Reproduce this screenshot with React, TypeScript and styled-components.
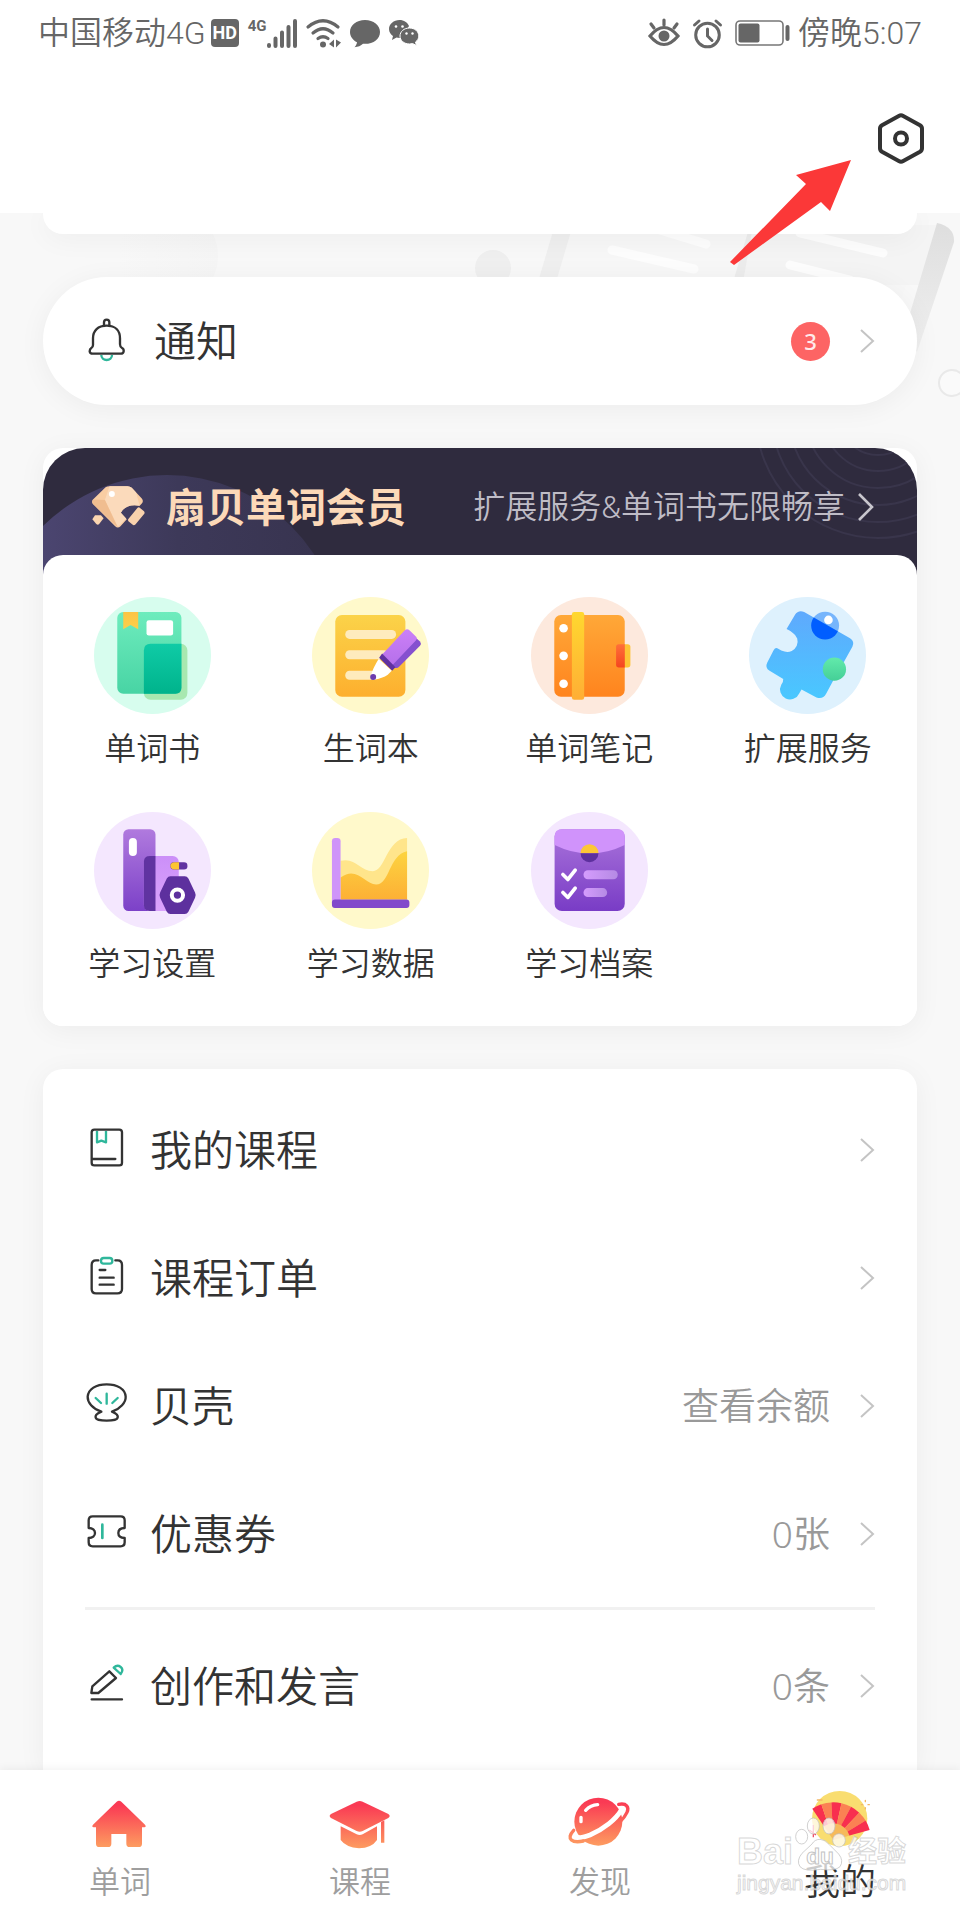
import React from "react";
import styled, { createGlobalStyle } from "styled-components";

const GlobalStyle = createGlobalStyle`
  *, *::before, *::after { box-sizing: border-box; }
  body {
    margin: 0;
    background: #f8f8f8;
    color: #333;
    font-family: Roboto, "Noto Sans CJK SC", sans-serif;
    font-weight: 350;
  }
  a { color: inherit; text-decoration: none; }
  svg { display: block; flex: none; overflow: visible; }
`;

const Page = styled.div`
  position: relative;
  min-height: 100vh;
  display: flex;
  flex-direction: column;
`;

const Header = styled.header`
  background: #fff;
  position: relative;
  z-index: 2;
`;

const StatusBar = styled.div`
  height: 66px;
  padding: 0 38px;
  display: flex;
  justify-content: space-between;
  align-items: center;
  color: #666;
  font-size: 32px;
  line-height: 40px;
`;

const StatusGroup = styled.div<{ $gap: number }>`
  display: flex;
  align-items: center;
  gap: ${(p) => p.$gap}px;
`;

const HdBadge = styled.span`
  width: 28px;
  height: 28px;
  border-radius: 4px;
  background: #666;
  color: #fff;
  font-size: 18px;
  line-height: 28px;
  font-weight: 700;
  text-align: center;
`;

const Signal = styled.span`
  display: flex;
  align-items: flex-start;
  font-size: 15px;
  line-height: 15px;
  font-weight: 700;
`;

const AppBar = styled.div`
  height: 147px;
  padding: 0 36px 2px;
  display: flex;
  justify-content: flex-end;
  align-items: center;
`;

const IconButton = styled.button`
  padding: 0;
  border: 0;
  background: none;
  cursor: pointer;
`;

const Pointer = styled.svg`
  position: absolute;
  top: 160px;
  right: 109px;
  z-index: 3;
`;

const Main = styled.main`
  position: relative;
  flex: 1;
  display: flex;
  flex-direction: column;
  gap: 43px;
  padding: 0 43px;
  overflow: hidden;
`;

const Backdrop = styled.svg`
  position: absolute;
  top: 0;
  right: 0;
`;

const Card = styled.section`
  position: relative;
  background: #fff;
  border-radius: 20px;
  box-shadow: 0 4px 28px rgba(0, 0, 0, 0.05);
`;

const ProfileCard = styled(Card)`
  height: 21px;
  border-radius: 0 0 20px 20px;
`;

const NoticeCard = styled(Card)`
  border-radius: 64px;
`;

const ListCard = styled(Card)`
  flex: 1;
  padding-top: 17px;
  border-radius: 20px 20px 0 0;
`;

const Row = styled.a<{ $gap?: number }>`
  height: 128px;
  padding: 0 43px;
  display: flex;
  align-items: center;
  gap: ${(p) => p.$gap ?? 22}px;
  font-size: 42px;
  line-height: 56px;
`;

const RowLabel = styled.span`
  padding-top: 4px;
`;

const RowEnd = styled.span`
  margin-left: auto;
  display: flex;
  align-items: center;
  gap: 30px;
  color: #999;
  font-family: "Noto Sans", "Noto Sans CJK SC", sans-serif;
  font-size: 37px;
  line-height: 48px;
`;

const CountBadge = styled.span`
  width: 39px;
  height: 39px;
  border-radius: 50%;
  background: #fd6464;
  color: #ffeaea;
  font-size: 22px;
  line-height: 39px;
  font-weight: 500;
  text-align: center;
`;

const Divider = styled.hr`
  height: 3px;
  margin: 9px 42px 12px;
  border: 0;
  background: #f1f1f1;
`;

const Banner = styled.a`
  position: relative;
  height: 127px;
  padding: 0 43px 9px 49px;
  display: flex;
  align-items: center;
  gap: 21px;
  overflow: hidden;
  border-radius: 42px 42px 0 0;
  background: #2f2b3e;
`;

const BannerArt = styled.svg<{ $side: "left" | "right" }>`
  position: absolute;
  top: 0;
  ${(p) => p.$side}: 0;
`;

const BannerLead = styled.span`
  position: relative;
  display: flex;
  align-items: center;
  gap: 21px;
`;

const BannerTitle = styled.strong`
  padding-top: 4px;
  color: #fcd9b8;
  font-size: 40px;
  line-height: 52px;
  font-weight: 700;
`;

const BannerNote = styled.span`
  position: relative;
  margin-left: auto;
  display: flex;
  align-items: center;
  gap: 12px;
  color: #bfbcc6;
  font-size: 32px;
  line-height: 40px;
`;

const Tiles = styled.div`
  position: relative;
  margin-top: -20px;
  padding: 42px 0 40px;
  display: grid;
  grid-template-columns: repeat(4, 1fr);
  row-gap: 41px;
  border-radius: 20px;
  background: #fff;
`;

const Tile = styled.a`
  display: flex;
  flex-direction: column;
  align-items: center;
  gap: 13px;
  font-size: 32px;
  line-height: 44px;
`;

const TabBar = styled.nav`
  position: relative;
  z-index: 2;
  height: 150px;
  display: grid;
  grid-template-columns: repeat(4, 1fr);
  background: #fff;
  box-shadow: 0 -2px 8px rgba(0, 0, 0, 0.05);
`;

const Tab = styled.a<{ $active?: boolean }>`
  padding-top: 21px;
  display: flex;
  flex-direction: column;
  align-items: center;
  gap: 10px;
  color: ${(p) => (p.$active ? "#333" : "#9e9e9e")};
  font-size: ${(p) => (p.$active ? 36 : 31)}px;
  line-height: 44px;
`;

const Watermark = styled.div`
  position: absolute;
  right: 52px;
  top: 47px;
  width: 171px;
  color: rgba(255, 255, 255, 0.75);
  font-family: "Liberation Sans", "Noto Sans CJK SC", sans-serif;
  font-weight: 400;
  -webkit-text-stroke: 1px rgba(190, 190, 190, 0.6);
  pointer-events: none;
`;

const WatermarkName = styled.div`
  display: flex;
  align-items: flex-end;
  gap: 2px;
  font-size: 36px;
  line-height: 38px;
  font-weight: 700;
`;

const WatermarkSuffix = styled.span`
  font-size: 29px;
  line-height: 38px;
`;

const WatermarkSite = styled.div`
  font-size: 21px;
  line-height: 24px;
`;

const Chevron = ({ large }: { large?: boolean }) =>
  large ? (
    <svg width="17" height="28" viewBox="0 0 17 28" fill="none" stroke="#c8c6cd" strokeWidth="2.6">
      <path d="M2 1 15 14 2 27" />
    </svg>
  ) : (
    <svg width="14" height="24" viewBox="0 0 14 24" fill="none" stroke="#c4c4c4" strokeWidth="2">
      <path d="M1 1 13 12 1 23" />
    </svg>
  );

/* ---------- status bar ---------- */

const SignalBars = () => (
  <svg width="30" height="29" viewBox="0 0 30 29" stroke="#666" strokeWidth="4" strokeLinecap="round">
    <path d="M2 26v1M8.500 19.500v7.500M15 13.500v13.500M21.500 8v19M28 2v25" />
  </svg>
);

const WifiIcon = () => (
  <svg width="35" height="29" viewBox="0 0 35 29" fill="none" stroke="#666" strokeWidth="3.200" strokeLinecap="round">
    <path d="M2 8Q17 -4.500 32 8M7 14Q17 5.500 27 14M12 19.500Q17 16 22 19.500" />
    <circle cx="17" cy="25.500" r="3" fill="#666" stroke="none" />
    <path d="M28 20.500v8l-5-3.500zM30 20.500v8l5-5z" fill="#666" stroke="none" />
  </svg>
);

const BubbleIcon = () => (
  <svg width="30" height="29" viewBox="0 0 30 29" fill="#666">
    <path d="M15 1C6.500 1 0 6.200 0 13c0 4.500 3 8.200 7 10.300-.3 2-1.200 3.700-2.500 5 3.500-.3 6.500-1.500 8.500-3.500C23 25.500 30 20.500 30 13 30 6.200 23.500 1 15 1z" />
  </svg>
);

const WechatIcon = () => (
  <svg width="30" height="26" viewBox="0 0 30 26" fill="#666">
    <path d="M10.500 0C4.700 0 0 4 0 9c0 3 1.700 5.500 4 7l-1 4 4.500-2.400c2 .5 4 .5 6 0L20 6C18.500 2.500 15 0 10.500 0z" />
    <path d="M20.500 8C15 8 11 11.600 11 16s4 8 9.500 8c1 0 2-.2 3-.5l4 2-1-3.500c2-1.500 3.300-3.500 3.300-6 0-4.400-4-8-9.300-8z" stroke="#fff" />
    <g fill="#fff">
      <circle cx="7" cy="6.500" r="1.300" />
      <circle cx="13.500" cy="6.500" r="1.300" />
      <circle cx="17.500" cy="13.500" r="1.200" />
      <circle cx="23.500" cy="13.500" r="1.200" />
    </g>
  </svg>
);

const EyeIcon = () => (
  <svg width="32" height="28" viewBox="0 0 32 28" fill="none" stroke="#666" strokeWidth="3.200" strokeLinecap="round">
    <path d="M2 17Q16 0 30 17Q16 34 2 17z" />
    <path d="M16 1v5M3 5l3 4M29 5l-3 4" />
    <circle cx="16" cy="17" r="5.500" fill="#666" stroke="none" />
  </svg>
);

const AlarmIcon = () => (
  <svg width="29" height="29" viewBox="0 0 29 29" fill="none" stroke="#666" strokeWidth="3" strokeLinecap="round">
    <circle cx="14.500" cy="16" r="11.800" />
    <path d="M14.500 10v7l4.500 4.500M1.500 6 6 2M27.500 6 23 2" />
  </svg>
);

const BatteryIcon = () => (
  <svg width="55" height="26" viewBox="0 0 55 26" fill="#666">
    <rect x="1" y="1" width="47" height="24" rx="4" fill="none" stroke="#777" strokeWidth="1.600" />
    <rect x="3.500" y="3.500" width="21" height="19" rx="2" />
    <rect x="50.500" y="5" width="4" height="16" rx="2" />
  </svg>
);

const HexIcon = () => (
  <svg width="46" height="51" viewBox="0 0 46 51" fill="none" stroke="#333" strokeWidth="4" strokeLinejoin="round">
    <path d="M20.800 2.900Q23 1.700 25.200 2.900L42 12.300Q44 13.500 44 15.800V35.200Q44 37.500 42 38.700L25.200 48.100Q23 49.300 20.800 48.100L4 38.700Q2 37.500 2 35.200V15.800Q2 13.500 4 12.300Z" />
    <circle cx="23" cy="25.500" r="6" />
  </svg>
);

/* ---------- line icons of the rows ---------- */

const LineIcon = ({ children }: { children: React.ReactNode }) => (
  <svg
    width="42"
    height="42"
    viewBox="0 3 126 126"
    fill="none"
    stroke="#333"
    strokeWidth="7"
    strokeLinecap="round"
    strokeLinejoin="round"
    aria-hidden="true"
  >
    {children}
  </svg>
);

const GREEN = "#2fb79b";

const BellIcon = () => (
  <LineIcon>
    <path d="M21 78V58C21 35 36 20 62 20S102 35 102 58V76Q102 84 108 87Q114 90 113 97Q112 104 104 104H20Q12 104 11 97Q11 90 16 87Q21 84 21 78Z" />
    <path d="M54 21V10Q54 2 62 2T70 10V21" />
    <path d="M46 108A16 15 0 0 0 78 108" stroke={GREEN} strokeLinecap="butt" />
  </LineIcon>
);

const BookIcon = () => (
  <LineIcon>
    <rect x="17" y="5" width="91" height="107" rx="8" />
    <path d="M19 93H88" />
    <path d="M33 9V43L46 38 60 43V9" stroke={GREEN} strokeLinecap="butt" />
  </LineIcon>
);

const OrderIcon = () => (
  <LineIcon>
    <path d="M37 13H30Q17 13 17 27V99Q17 112 30 112H94Q108 112 108 99V27Q108 13 95 13H88" />
    <path d="M41 42H58M41 65H83M41 86H83" />
    <rect x="45" y="6" width="34" height="17" rx="8" stroke={GREEN} />
  </LineIcon>
);

const ShellIcon = () => (
  <LineIcon>
    <path d="M46 83C20 75 4 55 5 38C7 15 30 1 62 1S118 15 119 38C120 55 103 75 78 83C90 88 97 95 95 101C93 108 79 110 62 110S31 108 29 101C27 95 34 88 46 83" />
    <path d="M62 29V59M29 42 45 57M95 42 79 57" stroke={GREEN} />
  </LineIcon>
);

const CouponIcon = () => (
  <LineIcon>
    <path d="M8 48V25Q8 13 20 13H104Q116 13 116 25V48C104 48 97 54 97 63S104 78 116 78V91Q116 103 104 103H20Q8 103 8 91V78C20 78 27 71 27 63S20 48 8 48Z" />
    <path d="M49 38V78" stroke={GREEN} strokeWidth="8" />
  </LineIcon>
);

const PencilIcon = () => (
  <LineIcon>
    <path d="M70 22 90 42 37 87H16L19 67ZM17 106H108" />
    <path d="M83 11Q94 1 104 9T104 30Z" stroke={GREEN} />
  </LineIcon>
);

/* ---------- round tile icons ---------- */

const Fade = ({ id, from, to }: { id: string; from: string; to: string }) => (
  <linearGradient id={id} x1="0" y1="0" x2="0" y2="1">
    <stop offset="0" stopColor={from} />
    <stop offset="1" stopColor={to} />
  </linearGradient>
);

const Disc = ({ color, children }: { color: string; children: React.ReactNode }) => (
  <svg width="117" height="117" viewBox="0 0 352 352" aria-hidden="true">
    <circle cx="176" cy="176" r="176" fill={color} />
    {children}
  </svg>
);

const WordBookArt = () => (
  <Disc color="#d7fdee">
    <Fade id="wb1" from="#6eecbd" to="#48d4a4" />
    <Fade id="wb2" from="#0fcba6" to="#00b38c" />
    <Fade id="wb3" from="#fcc444" to="#fbd04a" />
    <rect x="150" y="141" width="131" height="168" rx="20" fill="#a8e8b0" />
    <rect x="70" y="45" width="193" height="246" rx="18" fill="url(#wb1)" />
    <path d="M170 141H263V273Q263 291 245 291H150V161Q150 141 170 141Z" fill="url(#wb2)" />
    <path d="M88 45H133V97L110 84 88 97Z" fill="url(#wb3)" />
    <rect x="158" y="70" width="80" height="46" rx="7" fill="#fff" />
  </Disc>
);

const NewWordsArt = () => (
  <Disc color="#fff9cb">
    <Fade id="nw1" from="#fbd349" to="#fdaf2e" />
    <Fade id="nw2" from="#cb80f7" to="#b56fea" />
    <rect x="70" y="54" width="211" height="246" rx="20" fill="url(#nw1)" />
    <g fill="#feebbd">
      <rect x="100" y="99" width="153" height="27" rx="13" />
      <rect x="100" y="160" width="130" height="27" rx="13" />
      <rect x="100" y="222" width="95" height="27" rx="13" />
    </g>
    <path d="M314 124 325 134Q330 140 325 147L262 210Q255 217 247 211L236 202Z" fill="#8550cf" />
    <path d="M212 172 277 102Q285 93 294 101L314 120Q318 125 313 130L241 206Z" fill="url(#nw2)" />
    <path d="M211 170 202 183 241 222 251 211Z" fill="#5f31a0" />
    <path d="M201 186 240 222 228 234Q212 245 186 249L177 238Q183 214 201 186Z" fill="#fff" />
    <circle cx="184" cy="241" r="9" fill="#6c3cae" />
  </Disc>
);

const NotesArt = () => (
  <Disc color="#fde9dd">
    <Fade id="nt1" from="#ffa838" to="#ff841e" />
    <Fade id="nt2" from="#ffd82f" to="#ffae35" />
    <Fade id="nt3" from="#ff7039" to="#f4451f" />
    <rect x="256" y="142" width="43" height="70" rx="8" fill="#fdc435" />
    <rect x="70" y="54" width="212" height="246" rx="20" fill="url(#nt1)" />
    <path d="M264 142H282V212H264Q256 212 256 204V150Q256 142 264 142Z" fill="url(#nt3)" />
    <rect x="123" y="45" width="37" height="264" rx="7" fill="url(#nt2)" />
    <g fill="#fff">
      <circle cx="98" cy="94" r="13" />
      <circle cx="98" cy="177" r="13" />
      <circle cx="98" cy="261" r="13" />
    </g>
  </Disc>
);

const PUZZLE =
  "M113 96 138 54Q148 38 166 45L304 124Q319 134 311 150L288 191 251 256 232 291Q222 309 203 302L158 278 151 290A30 30 0 1 1 97 264Q104 255 103 247L62 222Q47 213 55 197L74 160Q80 150 88 156Q97 163 107 164A31 31 0 0 0 132 108Q124 101 113 96Z";

const ExtensionArt = () => (
  <Disc color="#def1fd">
    <Fade id="ex1" from="#5fa9fd" to="#49c8ff" />
    <Fade id="ex2" from="#62eaab" to="#45cf97" />
    <clipPath id="ex3">
      <path d={PUZZLE} />
    </clipPath>
    <circle cx="229" cy="86" r="42" fill="#76b5fc" />
    <path d={PUZZLE} fill="url(#ex1)" />
    <circle cx="229" cy="86" r="42" fill="#005eff" clipPath="url(#ex3)" />
    <circle cx="239" cy="69" r="13" fill="#fff" />
    <circle cx="257" cy="217" r="35" fill="url(#ex2)" />
  </Disc>
);

const SettingsArt = () => (
  <Disc color="#f4e7fe">
    <Fade id="st1" from="#b07ade" to="#7c41c8" />
    <Fade id="st2" from="#cb8ff8" to="#dba4fc" />
    <rect x="88" y="52" width="97" height="246" rx="16" fill="url(#st1)" />
    <rect x="105" y="78" width="24" height="54" rx="12" fill="#fff" />
    <rect x="150" y="132" width="105" height="166" rx="18" fill="url(#st2)" />
    <path d="M168 132H185V298H168Q150 298 150 280V150Q150 132 168 132Z" fill="#6033a1" />
    <rect x="230" y="151" width="51" height="22" rx="10" fill="#6033a1" />
    <path d="M240 151H256V173H240Q230 171 230 162T240 151Z" fill="#fdc534" />
    <path d="M230 193H273Q280 193 284 200L304 242Q308 250 304 258L284 300Q280 307 273 307H230Q223 307 219 300L199 258Q195 250 199 242L219 200Q223 193 230 193Z" fill="#5d309e" />
    <circle cx="251" cy="250" r="17" fill="none" stroke="#fff" strokeWidth="12" />
  </Disc>
);

const DataArt = () => (
  <Disc color="#fff9cb">
    <Fade id="dt1" from="#fcd440" to="#fdb035" />
    <path d="M86 147C130 135 145 178 183 178C220 178 225 80 286 78V263H86Z" fill="#ffe58b" />
    <path d="M86 197C135 160 160 218 193 218C235 218 230 130 286 118V263H86Z" fill="url(#dt1)" />
    <rect x="60" y="78" width="26" height="205" rx="10" fill="#cf94f9" />
    <rect x="60" y="263" width="233" height="26" rx="9" fill="#8249cb" />
  </Disc>
);

const ArchiveArt = () => (
  <Disc color="#f4e7fe">
    <Fade id="ar1" from="#a973da" to="#793cc6" />
    <linearGradient id="ar2">
      <stop offset="0" stopColor="#d59cfd" />
      <stop offset="1" stopColor="#b58ae4" />
    </linearGradient>
    <rect x="71" y="52" width="211" height="246" rx="22" fill="url(#ar1)" />
    <path d="M93 52H260Q282 52 282 74V99Q176 151 71 99V74Q71 52 93 52Z" fill="#d093fb" />
    <path d="M149 124A27 27 0 0 1 203 124Z" fill="#fdc636" />
    <path d="M149 124A27 27 0 0 0 203 124Z" fill="#5d309e" />
    <path d="M96 188 111 203 133 175M96 242 111 257 133 229" fill="none" stroke="#fff" strokeWidth="11" strokeLinecap="round" strokeLinejoin="round" />
    <rect x="158" y="175" width="103" height="27" rx="13" fill="url(#ar2)" />
    <rect x="158" y="229" width="71" height="27" rx="13" fill="url(#ar2)" />
  </Disc>
);

const GemIcon = () => (
  <svg width="53" height="42" viewBox="187 168 160 126" aria-hidden="true">
    <path d="M228 171Q233 168 240 168H294Q302 168 307 173L338 206Q343 213 338 220L331 227Q290 220 274 248L292 268 273 289Q265 297 257 289L190 222Q185 215 190 208Z" fill="#f9cda3" />
    <path d="M240 168H294Q302 168 307 173L320 187 331 227Q290 220 274 248L290 266 265 291 226 210Z" fill="#fbdabb" />
    <path d="M190 208 226 210 265 293 190 222Q185 215 190 208Z" fill="#f0bd90" />
    <path d="M324 234Q328 230 332 234L344 244Q348 249 343 254L318 284Q313 288 309 284L297 274Q294 270 298 266Z" fill="#f9d2ad" />
    <path d="M196 256H214L222 265 208 283Q204 286 200 282L188 268Z" fill="#fbd5b0" />
    <circle cx="247" cy="192" r="9" fill="#fff" />
  </svg>
);

/* ---------- tab icons ---------- */

const TabArt = ({ x, children }: { x: number; children: React.ReactNode }) => (
  <svg width="66" height="60" viewBox={`${x} 123 198 180`} aria-hidden="true">
    {children}
  </svg>
);

const Sunset = ({ id, y1, y2 }: { id: string; y1: number; y2: number }) => (
  <linearGradient id={id} gradientUnits="userSpaceOnUse" x1="0" y1={y1} x2="0" y2={y2}>
    <stop offset="0.1" stopColor="#fa3a54" />
    <stop offset="1" stopColor="#fd9c60" />
  </linearGradient>
);

const HomeArt = () => (
  <TabArt x={261}>
    <Sunset id="tb1" y1={152} y2={291} />
    <path d="M350 155Q357 150 364 155L435 224Q440 230 433 232H426V281Q426 291 416 291H389Q379 291 379 281V252H334V281Q334 291 324 291H298Q288 291 288 281V232H281Q274 230 279 224Z" fill="url(#tb1)" />
  </TabArt>
);

const CapArt = () => (
  <TabArt x={981}>
    <Sunset id="tb2" y1={152} y2={295} />
    <g fill="url(#tb2)">
      <path d="M1070 155Q1079 151 1088 155L1165 192Q1173 198 1165 204L1088 243Q1079 247 1070 243L993 204Q985 198 993 192Z" />
      <path d="M1022 229 1070 253Q1079 257 1088 253L1131 229V270Q1115 294 1077 295Q1038 292 1022 270Z" />
      <path d="M1143 216 1153 211V278H1143Z" />
    </g>
  </TabArt>
);

const PlanetArt = () => (
  <TabArt x={261}>
    <Sunset id="tb3" y1={142} y2={287} />
    <circle cx="355" cy="215" r="72" fill="url(#tb3)" />
    <path d="M287 256C293 268 312 262 330 255C370 238 408 208 424 180" fill="none" stroke="#fff" strokeWidth="14" />
    <path d="M416 163C440 158 448 172 441 187C436 198 428 208 418 218M310 273C278 280 256 268 281 241" fill="none" stroke="url(#tb3)" strokeWidth="10" strokeLinecap="round" />
    <path d="M317 181Q332 165 353 164M303 202V215" fill="none" stroke="#fff" strokeWidth="10" strokeLinecap="round" />
  </TabArt>
);

const FAN_STEPS = [0, 1, 2, 3, 4, 5, 6];

const fanPoint = (degrees: number, radius: number) => {
  const a = (degrees * Math.PI) / 180;
  return `${(1060 + radius * Math.cos(a)).toFixed(1)} ${(270 - radius * Math.sin(a)).toFixed(1)}`;
};

const FanArt = () => (
  <TabArt x={981}>
    <circle cx="1079" cy="206" r="83" fill="#f9dd70" />
    <path d={`M${fanPoint(124, 60)}A60 60 0 0 1 ${fanPoint(15, 60)}L1060 270Z`} fill="#f6b95a" />
    {FAN_STEPS.map((i) => {
      const start = 124 - i * 15.5;
      const end = start - 15.5;
      return (
        <path
          key={i}
          d={`M${fanPoint(start, 50)}L${fanPoint(start, 113)}A113 113 0 0 1 ${fanPoint(end, 113)}L${fanPoint(end, 50)}Z`}
          fill={i % 2 ? "#fb8153" : "#f82f4f"}
        />
      );
    })}
    <g stroke="#f3b765" strokeWidth="4" strokeLinecap="round">
      <path d="M1156 151V155M1156 173V177M1144 164H1148M1164 164H1168M1012 150H1026" />
    </g>
    <g stroke="#f0506a" strokeWidth="4" fill="none">
      <path d="M988 240 1008 255M1000 225V262" />
    </g>
  </TabArt>
);

const PawIcon = () => (
  <svg width="51" height="54" viewBox="945 203 153 162">
    <g fill="rgba(255,255,255,0.75)" stroke="rgba(190,190,190,0.7)" strokeWidth="3">
      <ellipse cx="1000" cy="230" rx="18" ry="24" />
      <ellipse cx="1047" cy="230" rx="18" ry="24" />
      <ellipse cx="965" cy="262" rx="18" ry="22" />
      <ellipse cx="1077" cy="273" rx="19" ry="20" />
      <path d="M1020 270Q1036 270 1048 286L1076 314Q1092 334 1080 352Q1066 366 1022 360Q974 368 960 352Q948 334 966 312L996 284Q1004 270 1020 270Z" />
    </g>
    <text x="1020" y="344" textAnchor="middle" fontSize="68" fontWeight="700" fill="#fff" stroke="#c4c4c4" strokeWidth="3">
      du
    </text>
  </svg>
);

/* ---------- page ---------- */

const tiles = [
  { label: "单词书", art: <WordBookArt /> },
  { label: "生词本", art: <NewWordsArt /> },
  { label: "单词笔记", art: <NotesArt /> },
  { label: "扩展服务", art: <ExtensionArt /> },
  { label: "学习设置", art: <SettingsArt /> },
  { label: "学习数据", art: <DataArt /> },
  { label: "学习档案", art: <ArchiveArt /> },
];

const rows = [
  { label: "我的课程", icon: <BookIcon /> },
  { label: "课程订单", icon: <OrderIcon /> },
  { label: "贝壳", icon: <ShellIcon />, value: "查看余额" },
  { label: "优惠券", icon: <CouponIcon />, value: "0张" },
];

const tabs = [
  { label: "单词", art: <HomeArt /> },
  { label: "课程", art: <CapArt /> },
  { label: "发现", art: <PlanetArt /> },
  { label: "我的", art: <FanArt />, active: true },
];

const RINGS = [39, 55, 72, 89, 106, 122];

const MenuRow = ({ label, icon, value }: { label: string; icon: React.ReactNode; value?: string }) => (
  <Row href="#">
    {icon}
    <RowLabel>{label}</RowLabel>
    <RowEnd>
      {value && <span>{value}</span>}
      <Chevron />
    </RowEnd>
  </Row>
);

export default function App() {
  return (
    <Page>
      <GlobalStyle />
      <Header>
        <StatusBar>
          <StatusGroup $gap={9}>
            <StatusGroup $gap={5}>
              <span>中国移动4G</span>
              <HdBadge>HD</HdBadge>
            </StatusGroup>
            <Signal>
              4G
              <SignalBars />
            </Signal>
            <WifiIcon />
            <BubbleIcon />
            <WechatIcon />
          </StatusGroup>
          <StatusGroup $gap={13}>
            <EyeIcon />
            <AlarmIcon />
            <StatusGroup $gap={8}>
              <BatteryIcon />
              <span>傍晚5:07</span>
            </StatusGroup>
          </StatusGroup>
        </StatusBar>
        <AppBar>
          <IconButton aria-label="设置">
            <HexIcon />
          </IconButton>
        </AppBar>
      </Header>
      <Pointer width="121" height="105" viewBox="0 0 121 105" aria-hidden="true">
        <path d="M121 0 66 15 76 24 0 102 4 105 91 42 100 51Z" fill="#fb3838" />
      </Pointer>

      <Main>
        <Backdrop width="960" height="220" viewBox="0 213 960 220" aria-hidden="true">
          <defs>
            <linearGradient id="bg1" x1="0" y1="0" x2="0" y2="1">
              <stop offset="0" stopColor="#dedede" />
              <stop offset="1" stopColor="#f0f0f0" />
            </linearGradient>
            <linearGradient id="bg2">
              <stop offset="0" stopColor="#f8f8f8" />
              <stop offset="1" stopColor="#f5f5f5" />
            </linearGradient>
          </defs>
          <circle cx="168" cy="256" r="50" fill="url(#bg2)" />
          <circle cx="493" cy="268" r="18" fill="#efefef" />
          <path d="M556 220H930L890 330H525Z" fill="#f7f7f7" />
          <path d="M554 228H572L556 282H538Z" fill="#efefef" />
          <path d="M750 225H940L920 285H733Z" fill="#f4f4f4" />
          <path d="M748 232 733 282H743L752 232Z" fill="#ececec" />
          <path d="M937 223Q955 227 954 242L917 352 905 330Z" fill="url(#bg1)" />
          <g stroke="#fdfdfd" strokeWidth="9" strokeLinecap="round">
            <path d="M612 250 694 269M660 230 706 244M790 265 850 280M800 233 883 253" />
          </g>
          <circle cx="952" cy="383" r="13" fill="#fafafa" stroke="#e9e9e9" strokeWidth="2" />
        </Backdrop>

        <ProfileCard />

        <NoticeCard>
          <Row href="#" $gap={26}>
            <BellIcon />
            <RowLabel>通知</RowLabel>
            <RowEnd>
              <CountBadge>3</CountBadge>
              <Chevron />
            </RowEnd>
          </Row>
        </NoticeCard>

        <Card>
          <Banner href="#">
            <BannerArt $side="left" width="320" height="127" viewBox="0 0 320 127" aria-hidden="true">
              <defs>
                <linearGradient id="bn1" gradientUnits="userSpaceOnUse" x1="0" y1="0" x2="270" y2="0">
                  <stop offset="0" stopColor="#4b4570" />
                  <stop offset="0.5" stopColor="#3d3959" />
                  <stop offset="1" stopColor="#383450" />
                </linearGradient>
              </defs>
              <circle cx="124" cy="203" r="176" fill="url(#bn1)" />
            </BannerArt>
            <BannerArt $side="right" width="160" height="127" viewBox="0 0 160 127" fill="none" stroke="#39354b" strokeWidth="2" aria-hidden="true">
              {RINGS.map((r) => (
                <circle key={r} cx="121" cy="-32" r={r} />
              ))}
            </BannerArt>
            <BannerLead>
              <GemIcon />
              <BannerTitle>扇贝单词会员</BannerTitle>
            </BannerLead>
            <BannerNote>
              扩展服务&amp;单词书无限畅享
              <Chevron large />
            </BannerNote>
          </Banner>
          <Tiles>
            {tiles.map((t) => (
              <Tile key={t.label} href="#">
                {t.art}
                <span>{t.label}</span>
              </Tile>
            ))}
          </Tiles>
        </Card>

        <ListCard>
          {rows.map((r) => (
            <MenuRow key={r.label} {...r} />
          ))}
          <Divider />
          <MenuRow label="创作和发言" icon={<PencilIcon />} value="0条" />
        </ListCard>
      </Main>

      <TabBar>
        {tabs.map((t) => (
          <Tab key={t.label} href="#" $active={t.active}>
            {t.art}
            <span>{t.label}</span>
          </Tab>
        ))}
        <Watermark>
          <WatermarkName>
            Bai
            <PawIcon />
            <WatermarkSuffix>经验</WatermarkSuffix>
          </WatermarkName>
          <WatermarkSite>jingyan.baidu.com</WatermarkSite>
        </Watermark>
      </TabBar>
    </Page>
  );
}
